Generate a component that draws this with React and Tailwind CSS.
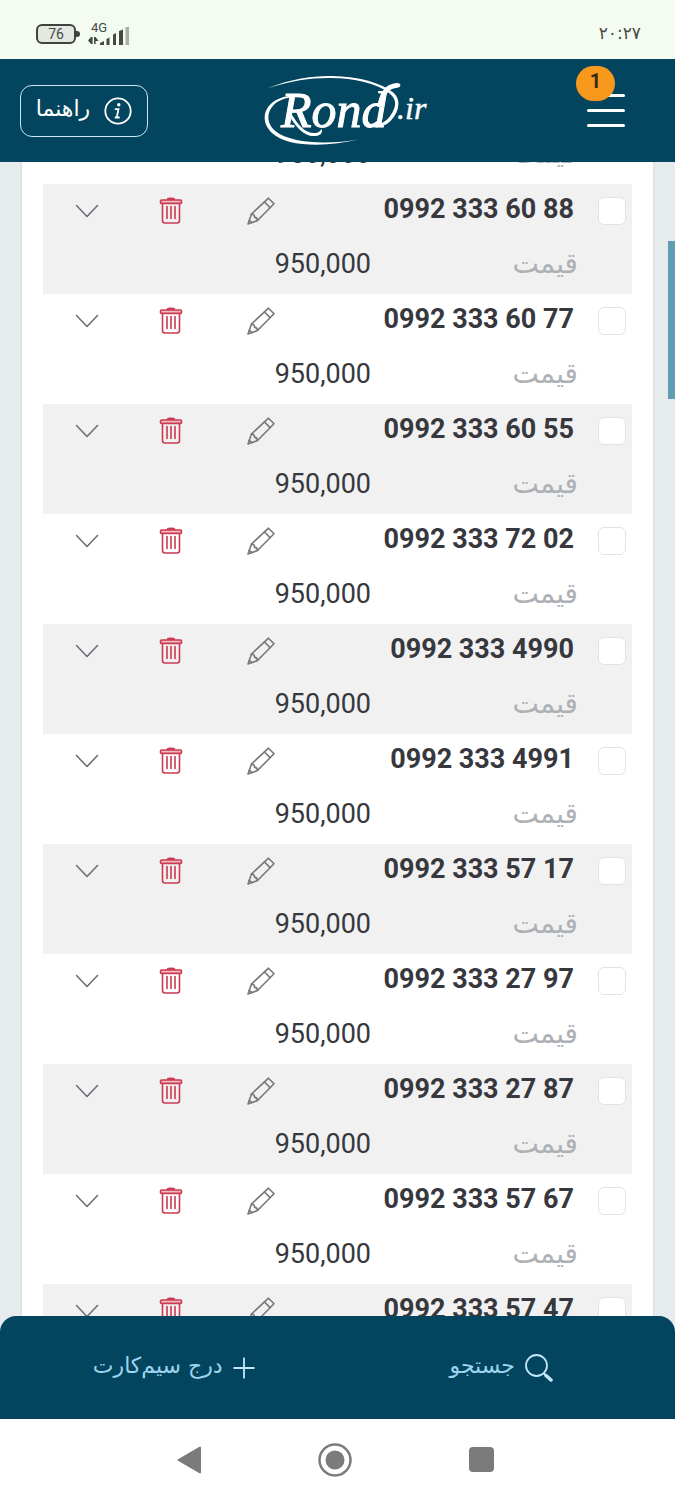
import React, { useLayoutEffect, useRef, useState } from 'react'

const PRICE = '950,000'

const NUMBERS = [
  '0992 333 60 99',
  '0992 333 60 88',
  '0992 333 60 77',
  '0992 333 60 55',
  '0992 333 72 02',
  '0992 333 4990',
  '0992 333 4991',
  '0992 333 57 17',
  '0992 333 27 97',
  '0992 333 27 87',
  '0992 333 57 67',
  '0992 333 57 47',
]

function ChevronIcon() {
  return (
    <svg width="24" height="24" viewBox="0 0 24 24" fill="none" stroke="#6b6f76" strokeWidth="1.6" strokeLinecap="round" strokeLinejoin="round">
      <path d="M1.500 6.500 12 17.500 22.500 6.500" />
    </svg>
  )
}

function TrashIcon() {
  return (
    <svg width="28" height="28" viewBox="0 0 28 28" fill="none" stroke="#cb3a50" strokeWidth="1.6" strokeLinejoin="round">
      <rect x="1.500" y="3" width="21" height="3.400" rx="1" fill="#efb9c0" />
      <path d="M8.500 2.200C9 .9 15 .9 15.500 2.200Z" fill="#cb3a50" />
      <path d="M3.500 7v16.500q0 2.500 2.500 2.500h12q2.500 0 2.500-2.500V7" />
      <path d="M8 9.500v12M12 9.500v12M16 9.500v12" strokeLinecap="round" />
    </svg>
  )
}

function PencilIcon() {
  return (
    <svg width="28" height="28" viewBox="0 0 28 28" fill="none" stroke="#74777c" strokeWidth="1.600" strokeLinejoin="round" strokeLinecap="round">
      <path d="M1 27 4.500 17 21.500 1.200 27 6.800 10.500 23.500Z" />
      <path d="M17.500 5l5.600 5.600M4.500 17q3.200.2 3.200 3.400 2.600.2 2.800 3.100M2.300 23.300l2.600 2.200" />
    </svg>
  )
}

function Logo() {
  return (
    <svg width="166" height="73" viewBox="0 0 166 73" fill="#fff">
      <g transform="scale(.3333) translate(-115 -41)">
        <path d="M128 84C200 55 265 46 320 47C410 49 470 69 505 96C532 118 523 157 497 183C480 199 458 204 438 200L440 192C466 194 484 184 497 166C519 135 515 114 492 97C455 69 390 54 318 53C262 52 205 60 128 84Z" />
        <path d="M240 108C205 101 164 107 139 130C113 154 113 190 142 218C185 259 300 263 404 237C304 255 196 248 153 213C127 191 124 160 145 136C167 112 205 107 239 113Z" />
        <path d="M200 160C222 195 240 217 268 218C281 218 287 213 290 205C299 222 276 231 256 226C229 219 207 189 194 166Z" />
        <path d="M458 140C464 102 478 70 518 68C530 68 530 80 519 82C494 83 480 100 474 140Z" />
      </g>
      <text x="18" y="53" fontSize="50" fontFamily="Liberation Serif, serif" fontStyle="italic" stroke="#fff">
        Rond<tspan x="134" y="45" fontSize="32" strokeWidth=".4">.ir</tspan>
      </text>
    </svg>
  )
}

function StatusBar() {
  return (
    <div dir="ltr" className="flex h-[59px] shrink-0 items-center justify-between bg-[#f4fbf1] pt-2 pr-[34px] pl-9 text-[#454a45]">
      <div className="flex items-center gap-2">
        <div className="flex items-center">
          <div className="flex h-5 w-10 items-center justify-center rounded-md border-2 border-[#3f433f] bg-[#e3e9e1] font-[Roboto,sans-serif] text-sm leading-none">76</div>
          <div className="h-1.5 w-1 rounded-r bg-[#3f433f]" />
        </div>
        <svg width="44" height="32" viewBox="0 -5 44 32" fill="#454a45">
          <text x="3" y="9" fontSize="13" fontFamily="Roboto, sans-serif">4G</text>
          <path d="M0 17.500 3 14v7ZM3 14h1.600v7H3ZM6 14h1.600v7H6ZM7.600 14l3 4H7.600Z" />
          <path d="M12 22v-2l4-2v4ZM18.500 22v-6l3-1.500V22ZM25 22V11.500l3-1.500v12ZM31 22V8l4-1.500V22Z" />
          <rect x="37.500" y="4" width="3.500" height="18" fill="#a9aea8" />
        </svg>
      </div>
      <time className="text-[17px]">۲۰:۲۷</time>
    </div>
  )
}

function Header() {
  return (
    <header dir="ltr" className="flex h-[103px] shrink-0 items-center bg-[#03455e] pr-[50px] pl-5 text-white">
      <button className="flex h-[52px] w-32 items-center justify-center gap-3.5 rounded-xl border border-[#c9e6f2]">
        <span className="pb-1 text-[22px] leading-7">راهنما</span>
        <svg width="28" height="28" viewBox="0 0 28 28" fill="none" stroke="#fff" strokeWidth="1.800" strokeLinecap="round">
          <circle cx="14" cy="14" r="12.700" />
          <circle cx="14.800" cy="7.800" r="1.700" fill="#fff" stroke="none" />
          <path d="M11.500 12.200h3l-1.800 8.300h2.300M11.500 20.500h1.500" />
        </svg>
      </button>
      <div className="flex flex-1 justify-center pr-[43px]">
        <Logo />
      </div>
      <button aria-label="منو" className="relative flex w-[38px] flex-col gap-[12px]">
        <span className="h-[3px] w-full rounded bg-white" />
        <span className="h-[3px] w-full rounded bg-white" />
        <span className="h-[3px] w-full rounded bg-white" />
        <span className="absolute -top-7 -left-[11px] flex h-[35px] w-[39px] items-center justify-center rounded-full bg-[#f8981d] pb-1.5 font-[Roboto,sans-serif] text-xl leading-none font-bold text-[#3a2a14]">1</span>
      </button>
    </header>
  )
}

function NumberRow({ number, checked, onToggle }) {
  const id = `sim-${number.replaceAll(' ', '')}`
  return (
    <li className="pr-1.5 pl-8 even:bg-[#f1f1f1]">
      <div className="flex h-[54px] items-center">
        <input
          id={id}
          type="checkbox"
          checked={checked}
          onChange={onToggle}
          className="size-7 appearance-none rounded-md border border-[#e2e2e4] bg-white checked:bg-[#03455e]"
        />
        <label htmlFor={id} dir="ltr" className="mr-6 pb-1 font-[Roboto,sans-serif] text-[27px] leading-8 font-bold">{number}</label>
        <div className="mr-auto flex w-[200px] items-center justify-between">
          <button aria-label="ویرایش"><PencilIcon /></button>
          <button aria-label="حذف"><TrashIcon /></button>
          <button aria-label="بیشتر"><ChevronIcon /></button>
        </div>
      </div>
      <dl className="flex h-14 items-start pt-2 pr-12">
        <dt className="w-[207px] text-[28px] leading-9 text-[#adb1b5]">قیمت</dt>
        <dd className="font-[Roboto,sans-serif] text-[27px] leading-9">{PRICE}</dd>
      </dl>
    </li>
  )
}

function BottomBar() {
  return (
    <footer className="relative flex h-[103px] shrink-0 items-center rounded-t-2xl bg-[#03455e] px-2.5 text-[22px] text-[#9ed3ee]">
      <button className="flex flex-1 items-center justify-center gap-2.5">
        <svg width="28" height="28" viewBox="0 0 28 28" fill="none" stroke="#c3e6fa" strokeLinecap="round">
          <circle cx="11.500" cy="11.500" r="10.500" strokeWidth="1.800" />
          <path d="M19 19.500 21 21.500" strokeWidth="2" />
          <path d="M21 21.500 26 26" strokeWidth="3.500" />
        </svg>
        <span className="pb-1">جستجو</span>
      </button>
      <button className="flex flex-1 items-center justify-center gap-2.5">
        <svg width="22" height="22" viewBox="0 0 22 22" stroke="#c3e6fa" strokeWidth="1.800">
          <path d="M11 .5v21M.5 11h21" />
        </svg>
        <span className="pb-1">درج سیم‌کارت</span>
      </button>
    </footer>
  )
}

function SystemNav() {
  return (
    <nav dir="ltr" className="flex h-[81px] shrink-0 items-center justify-center gap-[117px] bg-white pr-1 text-[#7b7b7b]">
      <button aria-label="بازگشت">
        <svg width="24" height="28" viewBox="0 0 24 28" fill="currentColor" stroke="currentColor" strokeWidth="2" strokeLinejoin="round">
          <path d="M1.500 14 23 1.500v25Z" />
        </svg>
      </button>
      <button aria-label="خانه">
        <svg width="34" height="34" viewBox="0 0 34 34">
          <circle cx="17" cy="17" r="15.500" fill="none" stroke="currentColor" strokeWidth="2.500" />
          <circle cx="17" cy="17" r="9.500" fill="currentColor" />
        </svg>
      </button>
      <button aria-label="برنامه‌ها" className="size-[25px] rounded bg-[#7b7b7b]" />
    </nav>
  )
}

export default function App() {
  const listRef = useRef(null)
  const [selected, setSelected] = useState([])

  useLayoutEffect(() => {
    listRef.current.scrollTop = 88
  }, [])

  function toggle(number) {
    setSelected((prev) => prev.includes(number) ? prev.filter((n) => n !== number) : [...prev, number])
  }

  return (
    <div dir="rtl" className="flex h-screen flex-col bg-[#e6ebee] font-['DejaVu_Sans',sans-serif] text-[#36383d]">
      <StatusBar />
      <Header />
      <main className="relative -mb-4 flex min-h-0 flex-1 flex-col">
        <div ref={listRef} className="min-h-0 flex-1 overflow-y-auto px-[22px] [scrollbar-width:none]">
          <ul className="bg-white px-[21px] shadow-sm">
            {NUMBERS.map((n) => (
              <NumberRow key={n} number={n} checked={selected.includes(n)} onToggle={() => toggle(n)} />
            ))}
          </ul>
        </div>
        <div className="absolute top-[79px] right-0 h-[158px] w-[7px] bg-[#5e9db3]" />
      </main>
      <BottomBar />
      <SystemNav />
    </div>
  )
}
